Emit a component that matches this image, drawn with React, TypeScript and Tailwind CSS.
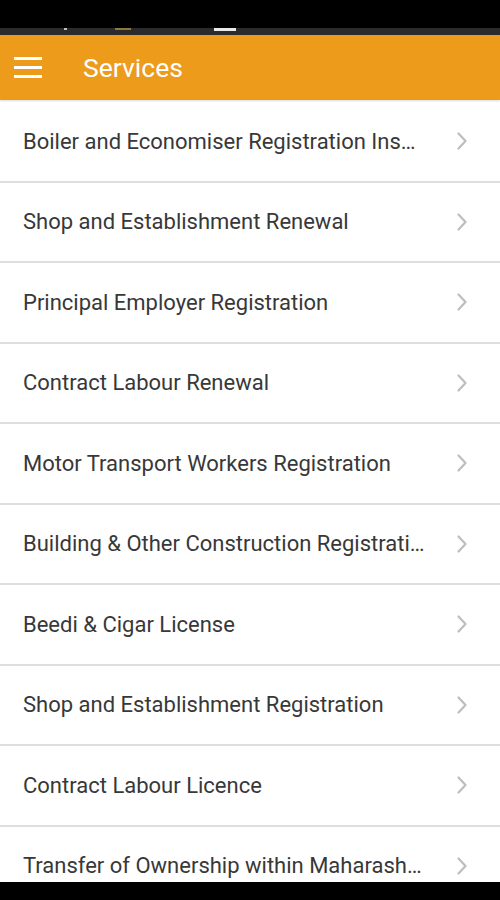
const services = [
  'Boiler and Economiser Registration Inspection',
  'Shop and Establishment Renewal',
  'Principal Employer Registration',
  'Contract Labour Renewal',
  'Motor Transport Workers Registration',
  'Building & Other Construction Registration',
  'Beedi & Cigar License',
  'Shop and Establishment Registration',
  'Contract Labour Licence',
  'Transfer of Ownership within Maharashtra',
];

function Chevron() {
  return (
    <svg width="12" height="20" viewBox="0 0 12 20" className="shrink-0">
      <path d="M2.5 2.5 L9.5 10 L2.5 17.5" fill="none" stroke="#bdbdbd" strokeWidth="2.2" strokeLinecap="round" strokeLinejoin="round" />
    </svg>
  );
}

export default function App() {
  return (
    <div className="relative h-[900px] w-[500px] overflow-hidden bg-white" style={{ fontFamily: 'Roboto, "Liberation Sans", sans-serif' }}>
      {/* status bar */}
      <div className="h-[28px] bg-black" />
      <div className="relative h-[7px] bg-[#2b2b2b]">
        <div className="absolute left-[64px] top-0 h-[2px] w-[3px] bg-white/70" />
        <div className="absolute left-[115px] top-0 h-[2px] w-[16px] bg-[#8a7a3a]" />
        <div className="absolute left-[214px] top-0 h-[3px] w-[22px] bg-white/90" />
      </div>

      {/* app bar */}
      <div className="flex h-[65px] items-center bg-[#ec9b1a] shadow-[0_1px_2px_rgba(0,0,0,0.15)]">
        <div className="ml-[14px] flex w-[28px] flex-col gap-[6px]">
          <span className="block h-[3px] bg-white" />
          <span className="block h-[3px] bg-white" />
          <span className="block h-[3px] bg-white" />
        </div>
        <h1 className="ml-[41px] text-[26.5px] font-normal text-white">Services</h1>
      </div>

      {/* list */}
      <div className="pt-[2px]">
        {services.map((s) => (
          <div key={s} className="flex h-[80.5px] items-center border-b-2 border-[#dedede] pl-[23px] pr-[32px]">
            <span className="min-w-0 flex-1 truncate pr-[31px] text-[22px] text-[#383838]">{s}</span>
            <Chevron />
          </div>
        ))}
      </div>

      {/* nav bar */}
      <div className="absolute bottom-0 left-0 right-0 h-[18px] bg-black" />
    </div>
  );
}
